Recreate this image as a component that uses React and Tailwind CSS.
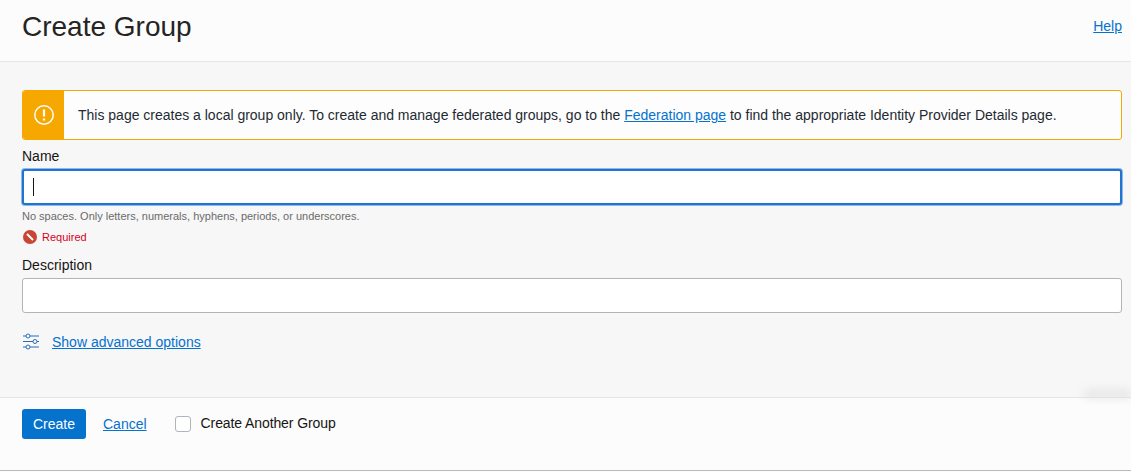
export default function App() {
  return (
    <div className="flex h-[472px] w-[1131px] flex-col overflow-hidden bg-[#fcfcfc] font-['Liberation_Sans',Arial,sans-serif] text-[#161513]">
      <header className="flex h-[62px] shrink-0 items-start justify-between border-b border-[#e6e6e6] pl-[22px] pr-[9px]">
        <h1 className="mt-[9px] text-[28px] leading-[36px] text-[#252423]">Create Group</h1>
        <a href="#" className="mt-[18px] text-sm leading-4 text-[#0572ce] underline">Help</a>
      </header>

      <main className="relative flex h-[335px] shrink-0 flex-col bg-[#f7f7f7] px-[22px] pt-[28px]">
        <div className="flex h-[50px] w-[1100px] overflow-hidden rounded-[3px] border border-[#f5a800] bg-[#fdfdfd]">
          <div className="flex w-[41px] shrink-0 items-center justify-center bg-[#f7a800]">
            <svg width="22" height="22" viewBox="0 0 22 22" fill="none" stroke="#fff">
              <circle cx="11" cy="11" r="9.2" strokeWidth="1.5" />
              <path d="M11 5.6v7" strokeWidth="2.2" />
              <path d="M11 14.6v2" strokeWidth="2.2" />
            </svg>
          </div>
          <p className="flex items-center pl-[14px] text-sm tracking-[-0.005px] text-[#1f2a33]">
            <span>
              This page creates a local group only. To create and manage federated groups, go to the{" "}
              <a href="#" className="text-[#0572ce] underline">Federation page</a> to find the appropriate Identity Provider Details page.
            </span>
          </p>
        </div>

        <label className="mt-[8px] text-sm leading-4">Name</label>
        <div className="mt-[5px] flex h-[36px] w-[1100px] items-center rounded-[3px] border-2 border-[#1f74d1] bg-white pl-[9px] shadow-[0_0_0_1px_#8fb8e6]">
          <span className="h-[18px] w-px bg-[#161513]" />
        </div>
        <p className="mt-[5px] text-[11px] leading-3 text-[#6b6b6b]">No spaces. Only letters, numerals, hyphens, periods, or underscores.</p>
        <div className="mt-[8px] flex items-center gap-[5px]">
          <svg width="14" height="14" viewBox="0 0 14 14" className="ml-px">
            <circle cx="7" cy="7" r="7" fill="#c74634" />
            <path d="M4 4l6 6" stroke="#fff" strokeWidth="2" />
          </svg>
          <span className="text-[11px] leading-3 text-[#d6001c]">Required</span>
        </div>

        <label className="mt-[13px] text-sm leading-4">Description</label>
        <div className="mt-[5px] h-[35px] w-[1100px] rounded-[3px] border border-[#b0b4bb] bg-white" />

        <div className="mt-[20px] flex items-center gap-[12px]">
          <svg width="18" height="18" viewBox="0 0 18 18" fill="none" stroke="#2a6db5" strokeWidth="1">
            <path d="M1 3h3M8 3h9M1 8.500h10M15 8.500h2M1 14h3M8 14h9" />
            <circle cx="6" cy="3" r="2" />
            <circle cx="13" cy="8.500" r="2" />
            <circle cx="6" cy="14" r="2" />
          </svg>
          <a href="#" className="text-sm leading-4 text-[#0572ce] underline">Show advanced options</a>
        </div>

        <div className="absolute bottom-0 right-0 h-[6px] w-[46px] bg-[#dedede] blur-[5px]" />
      </main>

      <footer className="flex h-[74px] shrink-0 items-start border-y border-t-[#e4e4e4] border-b-[#b8bcc2] bg-[#fcfcfc] pl-[22px] pt-[11px]">
        <button className="h-[30px] w-[64px] rounded-[3px] bg-[#0572ce] text-sm text-white">Create</button>
        <a href="#" className="ml-[17px] mt-[7px] text-sm leading-4 text-[#0572ce] underline">Cancel</a>
        <span className="ml-[28px] mt-[7px] h-[16px] w-[16px] rounded-[3px] border border-[#b0b4bb] bg-white" />
        <span className="ml-[10px] mt-[6px] text-sm leading-4 tracking-[-0.1px] text-[#161513]">Create Another Group</span>
      </footer>
    </div>
  );
}
